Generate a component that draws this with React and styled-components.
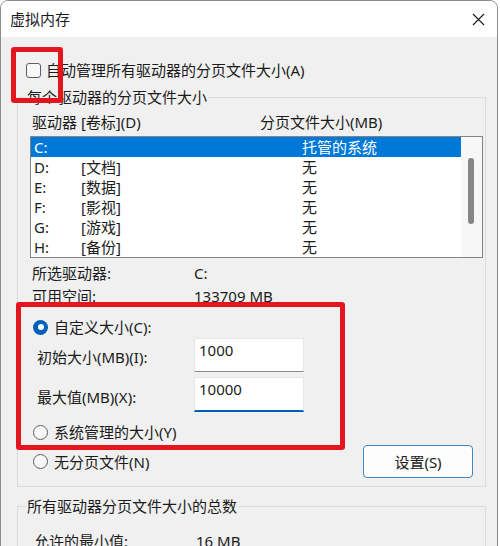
import React from "react";
import styled, { createGlobalStyle } from "styled-components";

const GlobalStyle = createGlobalStyle`
  html, body { margin: 0; padding: 0; background: #ffffff; }
  body {
    font-family: "Noto Sans", "Noto Sans CJK SC", sans-serif;
    font-size: 15px;
    color: #1b1b1b;
    overflow: hidden;
  }
  * { box-sizing: border-box; }
`;

const Window = styled.div`
  position: relative;
  width: 498px;
  height: 570px;
  border: 1px solid #8c8c8c;
  border-radius: 8px 8px 0 0;
  overflow: hidden;
  background: #f0f0f0;
`;

const TitleBar = styled.div`
  height: 36px;
  background: #ffffff;
  display: flex;
  align-items: center;
  justify-content: space-between;
  padding: 0 12px 0 9px;
  line-height: 20px;
`;

const Content = styled.div`
  display: flex;
  flex-direction: column;
  padding: 0 11px 0 16px;
  line-height: 20px;
`;

const CheckRow = styled.div`
  display: flex;
  align-items: center;
  gap: 5px;
  height: 20px;
  margin-top: 23px;
  padding-left: 9px;
`;

const CheckBox = styled.span`
  width: 15px;
  height: 15px;
  border: 1px solid #5f5f5f;
  border-radius: 3px;
  background: #f7f7f7;
`;

const Group = styled.div`
  position: relative;
  border: 1px solid #dcdcdc;
  margin-top: ${(p) => p.$mt}px;
  padding: ${(p) => p.$pad};
  display: flex;
  flex-direction: column;
`;

const Legend = styled.span`
  position: absolute;
  top: -11px;
  left: 8px;
  padding: 0 1px;
  background: #f0f0f0;
  line-height: 20px;
`;

const HeaderRow = styled.div`
  display: flex;
  height: 20px;
  padding-left: 2px;
`;

const Cell = styled.span`
  width: ${(p) => (p.$w ? `${p.$w}px` : "auto")};
  flex-shrink: 0;
  white-space: nowrap;
`;

const ListBox = styled.div`
  margin-top: 4px;
  width: 453px;
  height: 122px;
  border: 1px solid #838383;
  background: #ffffff;
  display: flex;
`;

const Rows = styled.div`
  flex: 1;
  display: flex;
  flex-direction: column;
`;

const ListRow = styled.div`
  display: flex;
  align-items: center;
  height: 20px;
  padding-left: 3px;
  background: ${(p) => (p.$sel ? "#0078d7" : "transparent")};
  color: ${(p) => (p.$sel ? "#ffffff" : "#1b1b1b")};
`;

const ScrollTrack = styled.div`
  width: 21px;
  background: #f7f7f7;
  padding: 21px 0 0 7px;
`;

const ScrollThumb = styled.div`
  width: 6px;
  height: 66px;
  border-radius: 3px;
  background: #868686;
`;

const InfoRow = styled.div`
  display: flex;
  line-height: 23px;
  padding-left: ${(p) => p.$pl}px;
  margin-top: ${(p) => p.$mt || 0}px;
`;

const RadioRow = styled.div`
  display: flex;
  align-items: center;
  gap: 6px;
  height: 20px;
  padding-left: 3px;
  margin-top: ${(p) => p.$mt || 0}px;
`;

const Radio = styled.span`
  width: 15px;
  height: 15px;
  border-radius: 50%;
  display: flex;
  align-items: center;
  justify-content: center;
  background: ${(p) => (p.$on ? "#005fb8" : "#f7f7f7")};
  border: ${(p) => (p.$on ? "none" : "1px solid #5f5f5f")};
  &::after {
    content: "";
    display: ${(p) => (p.$on ? "block" : "none")};
    width: 6px;
    height: 6px;
    border-radius: 50%;
    background: #ffffff;
  }
`;

const FieldRow = styled.div`
  display: flex;
  align-items: center;
  margin-top: ${(p) => p.$mt}px;
  padding-left: 7px;
`;

const FieldLabel = styled.span`
  width: 157px;
  padding-top: 4px;
  white-space: nowrap;
`;

const TextBox = styled.div`
  width: 110px;
  height: ${(p) => (p.$focus ? 35 : 34)}px;
  background: #ffffff;
  border: 1px solid #e6e6e6;
  border-bottom: ${(p) => (p.$focus ? "2px solid #005fb8" : "1px solid #8a8a8a")};
  padding: 1px 0 0 4px;
  line-height: 20px;
`;

const BottomRow = styled.div`
  display: flex;
  align-items: center;
  justify-content: space-between;
  height: 33px;
  margin-top: 3px;
`;

const Button = styled.button`
  width: 110px;
  height: 33px;
  margin-right: 10px;
  border: 1px solid #3d87c2;
  border-radius: 4px;
  background: #fdfdfd;
  font: inherit;
  color: #1b1b1b;
  line-height: 20px;
  padding: 0;
`;

const Highlight = styled.div`
  position: absolute;
  left: ${(p) => p.$x}px;
  top: ${(p) => p.$y}px;
  width: ${(p) => p.$w}px;
  height: ${(p) => p.$h}px;
  border: 5px solid #e3161f;
  border-radius: 3px;
  pointer-events: none;
`;

const drives = [
  ["C:", "", "托管的系统", true],
  ["D:", "[文档]", "无"],
  ["E:", "[数据]", "无"],
  ["F:", "[影视]", "无"],
  ["G:", "[游戏]", "无"],
  ["H:", "[备份]", "无"],
];

const CloseIcon = () => (
  <svg width="13" height="13" viewBox="0 0 13 13">
    <path d="M1 1 L12 12 M12 1 L1 12" stroke="#1b1b1b" strokeWidth="1.1" fill="none" />
  </svg>
);

export default function App() {
  return (
    <>
      <GlobalStyle />
      <Window>
        <TitleBar>
          <span>虚拟内存</span>
          <CloseIcon />
        </TitleBar>
        <Content>
          <CheckRow>
            <CheckBox />
            <span>自动管理所有驱动器的分页文件大小(A)</span>
          </CheckRow>

          <Group $mt={17} $pad="14px 2px 8px 12px">
            <Legend>每个驱动器的分页文件大小</Legend>
            <HeaderRow>
              <Cell $w={228}>驱动器 [卷标](D)</Cell>
              <Cell>分页文件大小(MB)</Cell>
            </HeaderRow>
            <ListBox>
              <Rows>
                {drives.map(([d, l, s, sel]) => (
                  <ListRow key={d} $sel={sel}>
                    <Cell $w={47}>{d}</Cell>
                    <Cell $w={221}>{l}</Cell>
                    <Cell>{s}</Cell>
                  </ListRow>
                ))}
              </Rows>
              <ScrollTrack>
                <ScrollThumb />
              </ScrollTrack>
            </ListBox>
            <InfoRow $pl={2} $mt={4}>
              <Cell $w={162}>所选驱动器:</Cell>
              <Cell>C:</Cell>
            </InfoRow>
            <InfoRow $pl={2}>
              <Cell $w={162}>可用空间:</Cell>
              <Cell>133709 MB</Cell>
            </InfoRow>
            <RadioRow $mt={9}>
              <Radio $on />
              <span>自定义大小(C):</span>
            </RadioRow>
            <FieldRow $mt={1}>
              <FieldLabel>初始大小(MB)(I):</FieldLabel>
              <TextBox>1000</TextBox>
            </FieldRow>
            <FieldRow $mt={5}>
              <FieldLabel>最大值(MB)(X):</FieldLabel>
              <TextBox $focus>10000</TextBox>
            </FieldRow>
            <RadioRow $mt={10}>
              <Radio />
              <span>系统管理的大小(Y)</span>
            </RadioRow>
            <BottomRow>
              <RadioRow>
                <Radio />
                <span>无分页文件(N)</span>
              </RadioRow>
              <Button>设置(S)</Button>
            </BottomRow>
          </Group>

          <Group $mt={19} $pad="23px 2px 8px 16px">
            <Legend>所有驱动器分页文件大小的总数</Legend>
            <InfoRow $pl={0}>
              <Cell $w={162}>允许的最小值:</Cell>
              <Cell>16 MB</Cell>
            </InfoRow>
          </Group>
        </Content>
        <Highlight $x={10} $y={46} $w={52} $h={56} />
        <Highlight $x={15} $y={301} $w={329} $h={148} />
      </Window>
    </>
  );
}
